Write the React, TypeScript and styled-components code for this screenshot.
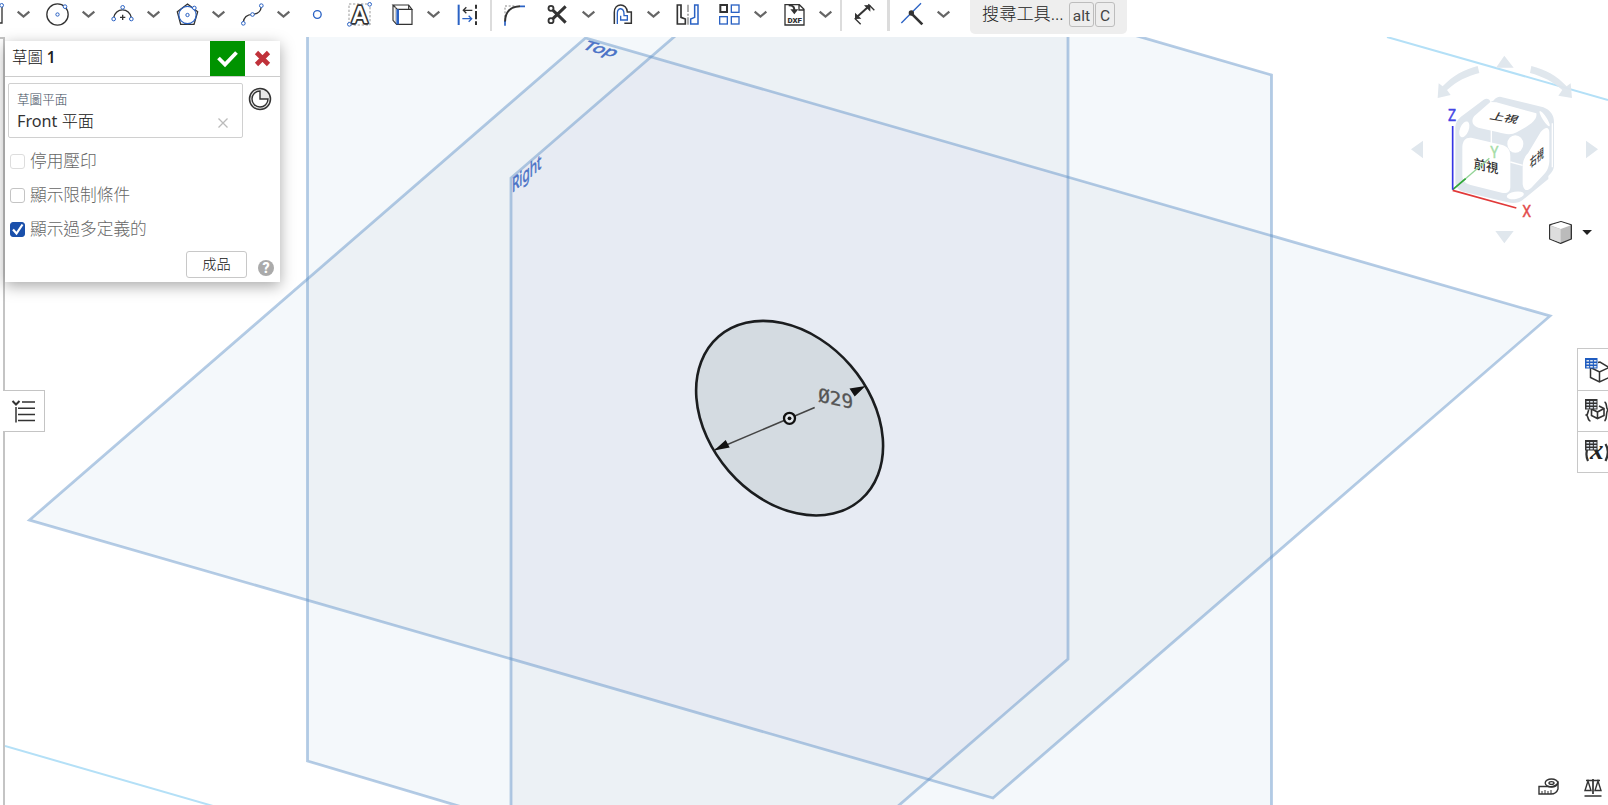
import React from 'react';
import styled, { createGlobalStyle } from 'styled-components';

const INK = '#333';
const BLUE = '#2a62c4';
const SANS = "'Noto Sans', 'Noto Sans CJK TC', sans-serif";

const Global = createGlobalStyle`
  * { box-sizing: border-box; }
  html, body { margin: 0; background: #fff; }
  body { font-family: ${SANS}; color: #333; overflow: hidden; }
  svg { display: block; flex: none; }
`;

const Page = styled.div`
  width: 1608px;
  height: 805px;
  display: flex;
  flex-direction: column;
  overflow: hidden;
  background: #fff;
`;

/* ---------- toolbar ---------- */

const Toolbar = styled.header`
  display: flex;
  align-items: flex-start;
  height: 37px;
  flex: none;
`;

const Slot = styled.div<{ $gap?: number; $size?: number }>`
  width: ${p => p.$size ?? 25}px;
  height: 29px;
  margin-left: ${p => p.$gap ?? 14}px;
  display: flex;
  align-items: center;
  flex: none;
`;

const Divider = styled.div<{ $gap: number; $w?: number }>`
  width: ${p => p.$w ?? 2}px;
  height: 31px;
  margin-left: ${p => p.$gap}px;
  background: #dcdcdc;
  flex: none;
`;

const SearchBox = styled.div`
  display: flex;
  align-items: flex-start;
  width: 157px;
  height: 34px;
  margin-left: 19px;
  padding: 2px 0 0 12px;
  background: #eee;
  border-radius: 0 0 5px 5px;
`;

const SearchText = styled.span`
  width: 87px;
  font-size: 17.2px;
  font-weight: 300;
  line-height: 24px;
  white-space: nowrap;
  color: #222;
`;

const Key = styled.kbd<{ $w: number }>`
  width: ${p => p.$w}px;
  height: 25px;
  margin-right: 1px;
  border: 1px solid #bdbdbd;
  border-radius: 3px;
  font: 15.5px/26px Roboto, sans-serif;
  text-align: center;
  color: #444;
`;

const GlyphSvg = styled.svg`
  overflow: visible;
`;

const Icon = ({ children }: { children: React.ReactNode }) => (
  <GlyphSvg width="25" height="25" viewBox="0 0 75 75" fill="none" stroke={INK} strokeWidth="4">{children}</GlyphSvg>
);

const Tool = ({ gap, children }: { gap?: number; children: React.ReactNode }) => (
  <Slot $gap={gap}><Icon>{children}</Icon></Slot>
);

const Chevron = ({ gap = 11 }: { gap?: number }) => (
  <Slot $gap={gap} $size={15}>
    <svg width="15" height="15" viewBox="0 0 45 45" fill="none" stroke="#666" strokeWidth="6.5">
      <path d="M5 14 22.5 29 40 14" />
    </svg>
  </Slot>
);

const Node = ({ x, y, r = 5.5 }: { x: number; y: number; r?: number }) => (
  <circle cx={x} cy={y} r={r} fill="#fff" stroke={BLUE} strokeWidth="3" />
);

/* Dark rim, white core: the stroke is painted under the white fill and widened by it. */
const OutlinedLetter = styled.text`
  font-family: Roboto, sans-serif;
  font-weight: 500;
  font-size: 72px;
  text-anchor: middle;
  paint-order: stroke;
  stroke: ${INK};
  stroke-width: 10px;
  stroke-linejoin: round;
  fill: #fff;
`;

const SketchToolbar = () => (
  <Toolbar>
    <Slot $gap={0} $size={5}>
      <svg width="5" height="25" viewBox="0 0 15 75" fill="none" stroke={INK} strokeWidth="4">
        <path d="M0 63H6V14" /><Node x={5} y={10} />
      </svg>
    </Slot>
    <Chevron />
    <Tool>
      <circle cx="37.5" cy="37.5" r="32" /><Node x={60} y={14} /><Node x={37.5} y={37.5} r={5} />
    </Tool>
    <Chevron />
    <Tool>
      <path d="M11 47A27 29 0 0 1 64 47" /><path d="M38 38V54M30 46H46" />
      <Node x={11} y={51} /><Node x={38} y={16} /><Node x={64} y={51} />
    </Tool>
    <Chevron />
    <Tool>
      <path d="M37.500 6 68 29 57 67H17L7 29Z" />
      <circle cx="37.500" cy="39" r="26" stroke={BLUE} strokeWidth="3.500" />
      <Node x={58} y={18} /><Node x={37.5} y={39} r={5} />
    </Tool>
    <Chevron />
    <Tool>
      <path d="M10 60C12 44 21 38 37 37 55 36 62 30 64 14" />
      <Node x={10} y={64} /><Node x={37.5} y={37.5} /><Node x={64} y={11} />
    </Tool>
    <Chevron />
    <Tool><circle cx="37" cy="37.500" r="11.500" stroke={BLUE} /></Tool>
    <Tool gap={17}>
      <rect x="6" y="6" width="63" height="63" stroke="#999" strokeWidth="3" strokeDasharray="7 5" />
      <OutlinedLetter x="38" y="64">A</OutlinedLetter>
      <Node x={68} y={7} /><Node x={7} y={67} />
    </Tool>
    <Tool gap={18}>
      <path d="M9 9H56L66 22H22ZM9 9V55L20 67H66V22M56 9V20" strokeWidth="3.500" />
      <path d="M23 22V67" stroke={BLUE} strokeWidth="8" />
      <path d="M16 12V60" strokeWidth="2" stroke="#999" />
    </Tool>
    <Chevron />
    <Tool>
      <path d="M11 8V69" stroke={BLUE} strokeWidth="6" />
      <path d="M63 8V69" strokeWidth="6" strokeDasharray="12 7 25 6" />
      <path d="M52 25H26M34 16 25 25 34 34" />
      <path d="M22 50H50M41 41 50 50 41 59" stroke={BLUE} />
    </Tool>
    <Divider $gap={10} />
    <Tool gap={10}>
      <path d="M9 45V12H42" stroke="#888" strokeWidth="3" strokeDasharray="6 5" />
      <path d="M9 60C9 32 24 14 54 13" strokeWidth="6" />
      <path d="M9 71V58M54 13H69" stroke={BLUE} strokeWidth="5" />
    </Tool>
    <Tool gap={18}>
      <circle cx="18" cy="19" r="7.500" strokeWidth="5.500" /><circle cx="18" cy="56" r="7.500" strokeWidth="5.500" />
      <path d="M24 25 37 37 62 13M24 50 37 37 62 62" strokeWidth="9" />
    </Tool>
    <Chevron />
    <Tool>
      <path d="M13 66V31C13 1 51 2 52 30H64V64H43" strokeWidth="4.500" />
      <path d="M22 66V33C22 15 42 16 42 36V41H52V54H32V41" stroke={BLUE} strokeWidth="4" />
    </Tool>
    <Chevron />
    <Tool>
      <path d="M7 9H18V46L31 51V66H7Z" strokeWidth="5" />
      <path d="M39 8V68" stroke="#888" strokeDasharray="22 5 6 5" />
      <path d="M69 9H59V46L47 51V66H69Z" stroke={BLUE} strokeWidth="4.500" />
    </Tool>
    <Tool gap={17}>
      <rect x="10" y="9" width="20" height="21" strokeWidth="6" />
      <g stroke={BLUE}><rect x="43" y="9" width="23" height="22" /><rect x="8" y="44" width="23" height="22" /><rect x="43" y="44" width="23" height="22" /></g>
    </Tool>
    <Chevron />
    <Tool>
      <path d="M9 42V8H52L66 22V69H9V42M51 9V24H66" />
      <path d="M20 10C36 10 37 17 37 26" strokeWidth="6" /><path d="M25 22H49L37 37Z" fill={INK} stroke="none" />
      <text x="38" y="63" textAnchor="middle" fontFamily="Roboto" fontWeight="900" fontSize="24" fill={INK} stroke="none">DXF</text>
    </Tool>
    <Chevron />
    <Divider $gap={7} />
    <Tool gap={10}>
      <path d="M14 46 48 15" strokeWidth="6" /><path d="M9 51V32L28 50ZM55 9V29L36 10Z" fill={INK} stroke="none" />
      <path d="M8 49 26 67M49 7 67 25" strokeWidth="4" />
    </Tool>
    <Divider $gap={10} $w={3} />
    <Tool gap={10}>
      <path d="M4 63 63 4" stroke={BLUE} /><path d="M34 34 67 67" strokeWidth="8" /><circle cx="34" cy="33" r="8" fill={INK} stroke="none" />
    </Tool>
    <Chevron />
    <SearchBox>
      <SearchText>搜尋工具...</SearchText>
      <Key $w={25}>alt</Key>
      <Key $w={20}>C</Key>
    </SearchBox>
  </Toolbar>
);

/* ---------- model space ---------- */

const Workspace = styled.main`
  position: relative;
  display: flex;
  flex: 1;
  min-height: 0;
`;

const TreeEdge = styled.div`
  width: 5px;
  flex: none;
  border-top: 2px solid #c4c4c4;
  border-right: 2px solid #c4c4c4;
`;

const FRONT = 'M307.500-205 1271.500 75V1048L307.500 761Z';
const TOP = 'M585.500 38 1550 316 993 798 29.500 520Z';
const RIGHT = 'M511 178 1068-304V659L511 1141Z';

/* Faces darken once for each further plane that overlaps them. */
const Scene = () => (
  <svg width="1603" height="768" viewBox="5 37 1603 768">
    <defs>
      <clipPath id="front"><path d={FRONT} /></clipPath>
      <clipPath id="top"><path d={TOP} /></clipPath>
    </defs>
    <g stroke="#b4e0f7" strokeWidth="2">
      <path d="M1387 37 1608 100" /><path d="M5 746 213 806" />
    </g>
    <path d={FRONT} fill="#f4f8fb" />
    <path d={TOP} fill="#f4f8fb" />
    <g clipPath="url(#front)">
      <path d={TOP} fill="#ecf1f5" />
      <path d={RIGHT} fill="#ecf1f5" />
      <g clipPath="url(#top)"><path d={RIGHT} fill="#e7ebf3" /></g>
    </g>
    <g fill="none" stroke="rgba(94,144,198,.46)" strokeWidth="2.800">
      <path d={FRONT} /><path d={TOP} /><path d={RIGHT} />
    </g>
    <g fontFamily="Noto Sans" fill="#4a72c6" stroke="#4a72c6" strokeWidth=".6">
      <text transform="matrix(1.12 .3 -.66 .64 581 48.500)" fontSize="17">Top</text>
      <text transform="matrix(.59 -.51 0 1 512 193)" fontSize="20">Right</text>
    </g>
    <ellipse rx="108.200" ry="80.600" transform="translate(789.600 418.200) rotate(49)" fill="#d4dbe1" stroke="#1b1d1f" strokeWidth="2.600" />
    <path d="M714.500 450 814.700 407.500" stroke="#444" strokeWidth="1.500" />
    <path d="M714 450.500 725.700 440 729.700 447.500ZM865.500 386 849.500 388.500 854.700 396.500Z" fill="#111" />
    <circle cx="789.500" cy="418.300" r="5.500" fill="#e2e7eb" stroke="#111" strokeWidth="2.300" />
    <circle cx="789.500" cy="418.300" r="1.900" fill="#111" />
    <text transform="matrix(1.02 .22 .04 1 818.400 401.500)" fontFamily="DejaVu Sans Mono" fontSize="19" fill="#555" stroke="#555" strokeWidth=".3">Ø29</text>
  </svg>
);

const CubeLayer = styled.div`
  position: absolute;
  left: 1370px;
  top: 0;
`;

const ViewCube = () => (
  <CubeLayer>
    <svg width="238" height="213" viewBox="0 21 714 639" fill="#dfe6ed">
      <g opacity=".95">
        <path d="M403 77 431 113H378ZM403 640 376 603H431ZM123 358 159 332V385ZM684 358 648 332V385Z" />
        <path d="M323 108 328 129C292 138 260 154 231 180L242 195 203 204 206 160 218 169C247 138 282 118 323 108Z" />
        <path d="M484 108 480 129C518 139 548 155 577 180L565 197 606 204 602 160 590 169C562 138 526 118 484 108Z" />
      </g>
      <path d="M390 200 520 232C542 240 552 258 552 275V405C552 420 545 427 535 438L535 447 458 510C447 519 430 521 410 516L280 485C264 480 256 470 256 455V290C256 278 263 268 273 260L340 210C350 203 359 207 361 216L370 212C377 203 383 200 390 200Z" />
      <g fill="#fff">
        <path d="M361 216 379 217 499 250C503 270 480 286 440 307 425 316 405 313 385 307L325 293C307 288 302 272 313 258Z" />
        <path d="M277 350C278 330 290 320 307 324L397 345C415 350 421 362 421 380V470C421 486 410 492 395 488L302 465C284 460 277 451 277 436Z" />
        <path d="M458 412C458 393 463 381 474 370L512 306C527 289 538 290 538 309V393C537 411 532 423 520 435L484 473C469 487 460 479 458 463Z" />
        <ellipse cx="436" cy="342" rx="24" ry="26" />
        <ellipse cx="283" cy="298" rx="13" ry="25" transform="rotate(22 283 298)" />
        <ellipse cx="436" cy="496" rx="26" ry="11" transform="rotate(-10 436 496)" />
        <ellipse cx="524" cy="266" rx="6" ry="27" transform="rotate(-33 524 266)" />
      </g>
      <path d="M364 299V342M421 396 458 406M547 280V412" stroke="#fff" strokeWidth="4" />
      <g fontFamily="Noto Sans CJK TC" fontWeight="500" fill="#333">
        <text transform="matrix(1 .17 -.35 .66 357 266)" fontSize="41">上視</text>
        <text transform="matrix(.95 .22 0 1 311 414)" fontSize="39">前視</text>
        <text transform="matrix(.56 -.46 0 1 479 415)" fontSize="38">右視</text>
      </g>
      <path d="M248 479 358 385" stroke="#93d497" strokeWidth="4" />
      <path d="M248 479 287 446" stroke="#32a83a" strokeWidth="5" />
      <path d="M248 481 439 534" stroke="#e13939" strokeWidth="5" />
      <path d="M248 479V288" stroke="#3535e4" strokeWidth="5" />
      <g fontFamily="Roboto" fontSize="52" strokeWidth="1.200">
        <text transform="translate(234 273) scale(.78 1)" fill="#4646e5" stroke="#4646e5">Z</text>
        <text transform="translate(457 561) scale(.82 1)" fill="#e34b4b" stroke="#e34b4b">X</text>
        <text transform="translate(361 383) scale(.86 1)" fontSize="48" fill="#a5dda7" stroke="#a5dda7">Y</text>
      </g>
      <g stroke="#333" strokeWidth="4" strokeLinejoin="round">
        <path d="M539 585 573 575 604 585V627L572 640 539 627Z" fill="#bbb" />
        <path d="M541 586 573 576 603 586 572 597Z" fill="#fff" stroke="none" />
        <path d="M541 587 572 598V638L541 626Z" fill="#ddd" stroke="none" />
      </g>
      <path d="M637 600H666L651 615Z" fill="#222" />
    </svg>
  </CubeLayer>
);

/* ---------- sketch dialog ---------- */

const Dialog = styled.section`
  position: absolute;
  left: 5px;
  top: 4px;
  width: 275px;
  height: 241px;
  background: #fff;
  box-shadow: 0 4px 14px rgba(0, 0, 0, .34);
  display: flex;
  flex-direction: column;
`;

const DialogHeader = styled.div`
  display: flex;
  height: 36px;
  border-bottom: 1px solid #ccc;
`;

const DialogTitle = styled.div`
  flex: 1;
  padding-left: 7px;
  font-size: 15.4px;
  font-weight: 600;
  line-height: 34px;
  color: #222;
`;

const Han = styled.span`
  font-weight: 300;
  color: #111;
`;

const HeaderButton = styled.button<{ $bg: string }>`
  width: 35px;
  height: 35px;
  padding: 0;
  border: 0;
  background: ${p => p.$bg};
`;

const FieldRow = styled.div`
  display: flex;
  gap: 5px;
  padding: 6px 0 0 3px;
`;

const Field = styled.div`
  display: flex;
  width: 235px;
  height: 55px;
  border: 1px solid #d0d0d0;
  border-radius: 2px;
  padding: 7px 14px 0 8px;
  align-items: flex-end;
  justify-content: space-between;
`;

const FieldText = styled.div`
  height: 46px;
`;

const FieldLabel = styled.div`
  font-size: 12.6px;
  font-weight: 300;
  line-height: 18px;
  color: #3c4b5c;
`;

const FieldValue = styled.div`
  font-size: 16.2px;
  line-height: 25px;
`;

const Clock = styled.div`
  padding-top: 4px;
`;

const Options = styled.div`
  display: flex;
  flex-direction: column;
  padding: 6px 0 0 5px;
`;

const Option = styled.label`
  display: flex;
  align-items: center;
  gap: 5px;
  height: 34.200px;
  font-size: 16.700px;
  font-weight: 300;
  color: #666;
`;

const OptionText = styled.span`
  margin-top: -2px;
`;

const Check = styled.span<{ $on?: boolean; $faint?: boolean }>`
  width: 15px;
  height: 15px;
  border: 1px solid ${p => (p.$on ? '#1a50ab' : p.$faint ? '#ddd' : '#c4c4c4')};
  border-radius: 3px;
  background: ${p => (p.$on ? '#1a50ab' : '#fff')};
`;

const Footer = styled.div`
  display: flex;
  justify-content: flex-end;
  align-items: flex-start;
  gap: 11px;
  padding: 4px 6px 0 0;
`;

const DoneButton = styled.button`
  width: 61px;
  height: 27px;
  padding: 0;
  border: 1px solid #c8c8c8;
  border-radius: 3px;
  background: #fff;
  font: 300 14.200px/24px ${SANS};
  color: #111;
`;

const Help = styled.span`
  width: 16px;
  height: 16px;
  margin-top: 9px;
  border-radius: 50%;
  background: #aaa;
  color: #fff;
  font: 900 14px/16px Roboto, sans-serif;
  text-align: center;
`;

const SketchDialog = () => (
  <Dialog>
    <DialogHeader>
      <DialogTitle><Han>草圖</Han> 1</DialogTitle>
      <HeaderButton $bg="#009300">
        <svg width="35" height="35" fill="none" stroke="#fff" strokeWidth="3.800"><path d="M8.500 17 15 23.500 26.500 11.500" /></svg>
      </HeaderButton>
      <HeaderButton $bg="#fff">
        <svg width="35" height="35" fill="none" stroke="#c0323a" strokeWidth="4.600"><path d="M11.500 11.500 23.500 23.500M23.500 11.500 11.500 23.500" /></svg>
      </HeaderButton>
    </DialogHeader>
    <FieldRow>
      <Field>
        <FieldText>
          <FieldLabel>草圖平面</FieldLabel>
          <FieldValue>Front <Han>平面</Han></FieldValue>
        </FieldText>
        <svg width="10" height="19" fill="none" stroke="#bbb" strokeWidth="1.300"><path d="M.5 .5 9.500 9.500M9.500 .5 .5 9.500" /></svg>
      </Field>
      <Clock>
        <svg width="24" height="24" fill="none" stroke="#333">
          <circle cx="12" cy="12" r="10.500" strokeWidth="1.500" fill="#e8e8e8" />
          <path d="M12 4A8 8 0 1 0 20 12H12Z" fill="#fff" strokeWidth="1.400" />
        </svg>
      </Clock>
    </FieldRow>
    <Options>
      <Option><Check $faint /><OptionText>停用壓印</OptionText></Option>
      <Option><Check /><OptionText>顯示限制條件</OptionText></Option>
      <Option>
        <Check $on><svg width="13" height="13" fill="none" stroke="#fff" strokeWidth="2.200"><path d="M2 6.500 5.500 10.500 11.500 1.500" /></svg></Check>
        <OptionText>顯示過多定義的</OptionText>
      </Option>
    </Options>
    <Footer><DoneButton>成品</DoneButton><Help>?</Help></Footer>
  </Dialog>
);

/* ---------- side tabs and status icons ---------- */

const TreeTab = styled.div`
  position: absolute;
  left: 3px;
  top: 353px;
  width: 42px;
  height: 42px;
  background: #fff;
  border: 1px solid #c4c4c4;
  border-left: 0;
  display: flex;
  align-items: center;
  padding-left: 8px;
`;

const SideTabs = styled.nav`
  position: absolute;
  left: 1577px;
  top: 311px;
  width: 31px;
  border: 1px solid #c8c8c8;
  border-right: 0;
  background: #fff;
`;

const SideTab = styled.div`
  height: 41px;
  padding: 9px 0 0 7px;
  & + & { border-top: 1px solid #c8c8c8; padding-top: 8px; }
`;

const StatusIcons = styled.div`
  position: absolute;
  left: 1538px;
  top: 741px;
  display: flex;
  gap: 25px;
`;

const Table = ({ color }: { color: string }) => (
  <g>
    <rect x="0" y="0" width="12.500" height="10.500" fill={color} stroke="none" />
    <path d="M1.500 2.800H11.500M1.500 5.800H11.500M1.500 8.700H11.500" stroke="#dfe5ee" strokeWidth="1.500" strokeDasharray="2.600 1.100" />
  </g>
);

export default function App() {
  return (
    <Page>
      <Global />
      <SketchToolbar />
      <Workspace>
        <TreeEdge />
        <Scene />
        <ViewCube />
        <SketchDialog />
        <TreeTab>
          <svg width="26" height="24" fill="none" stroke="#333" strokeWidth="1.500">
            <path d="M1.500 2 5 5.500 8.500 2" strokeWidth="2" /><path d="M5 8V23.500M11 3H24M7 9.300H24M7 15.500H24M7 21.500H24" />
          </svg>
        </TreeTab>
        <SideTabs>
          <SideTab>
            <svg width="23" height="26" fill="none" stroke="#333" strokeWidth="1.500">
              <path d="M5.500 9V19.500L14.500 24 24 19.500M5.500 9.500 14.500 14 24 9.500M14.500 14V24M13 4.500 15 4 24 9.500" /><Table color="#1f5cc0" />
            </svg>
          </SideTab>
          <SideTab>
            <svg width="23" height="26" fill="none" stroke="#333" strokeWidth="1.600">
              <path d="M4 11C2.500 12 3.500 15 1.500 16 3.500 17 2.500 22 5.500 22M19.500 3C22.500 4 20.500 9 23 11 20.500 13 22.500 20 19.500 22M6.500 10V16.500L12.500 19.500 19 16.500V9.500L14 7M6.500 10 12.500 13 19 9.500M12.500 13V19" /><Table color="#333" />
            </svg>
          </SideTab>
          <SideTab>
            <GlyphSvg width="23" height="26" fill="none" stroke="#333" strokeWidth="2.200">
              <path d="M2 10C1 14 1 17 3 21M20.500 4C23.500 9 23.500 15 20.500 21" />
              <text x="5" y="18.500" fontFamily="Liberation Serif" fontStyle="italic" fontWeight="700" fontSize="27" fill="#222" stroke="none">x</text>
              <Table color="#333" />
            </GlyphSvg>
          </SideTab>
        </SideTabs>
        <StatusIcons>
          <svg width="21" height="18" fill="none" stroke="#333" strokeWidth="1.400">
            <path d="M1 8.500H10C14 9 18 8 20 5V11C19 14 17 16 13 16H1Z" /><ellipse cx="13.500" cy="5" rx="6.300" ry="4" /><ellipse cx="13.500" cy="5" rx="2.500" ry="1.400" />
            <path d="M4 16V13M7 16V12M10 16V13M13 16V12" strokeWidth="1" />
          </svg>
          <svg width="20" height="20" fill="none" stroke="#333" strokeWidth="1.400">
            <path d="M2 2.500H16M9 1V16M.5 18H17.500" strokeWidth="1.700" /><path d="M4 3 1 12.500H7ZM14 3 11 12.500H17Z" />
          </svg>
        </StatusIcons>
      </Workspace>
    </Page>
  );
}
